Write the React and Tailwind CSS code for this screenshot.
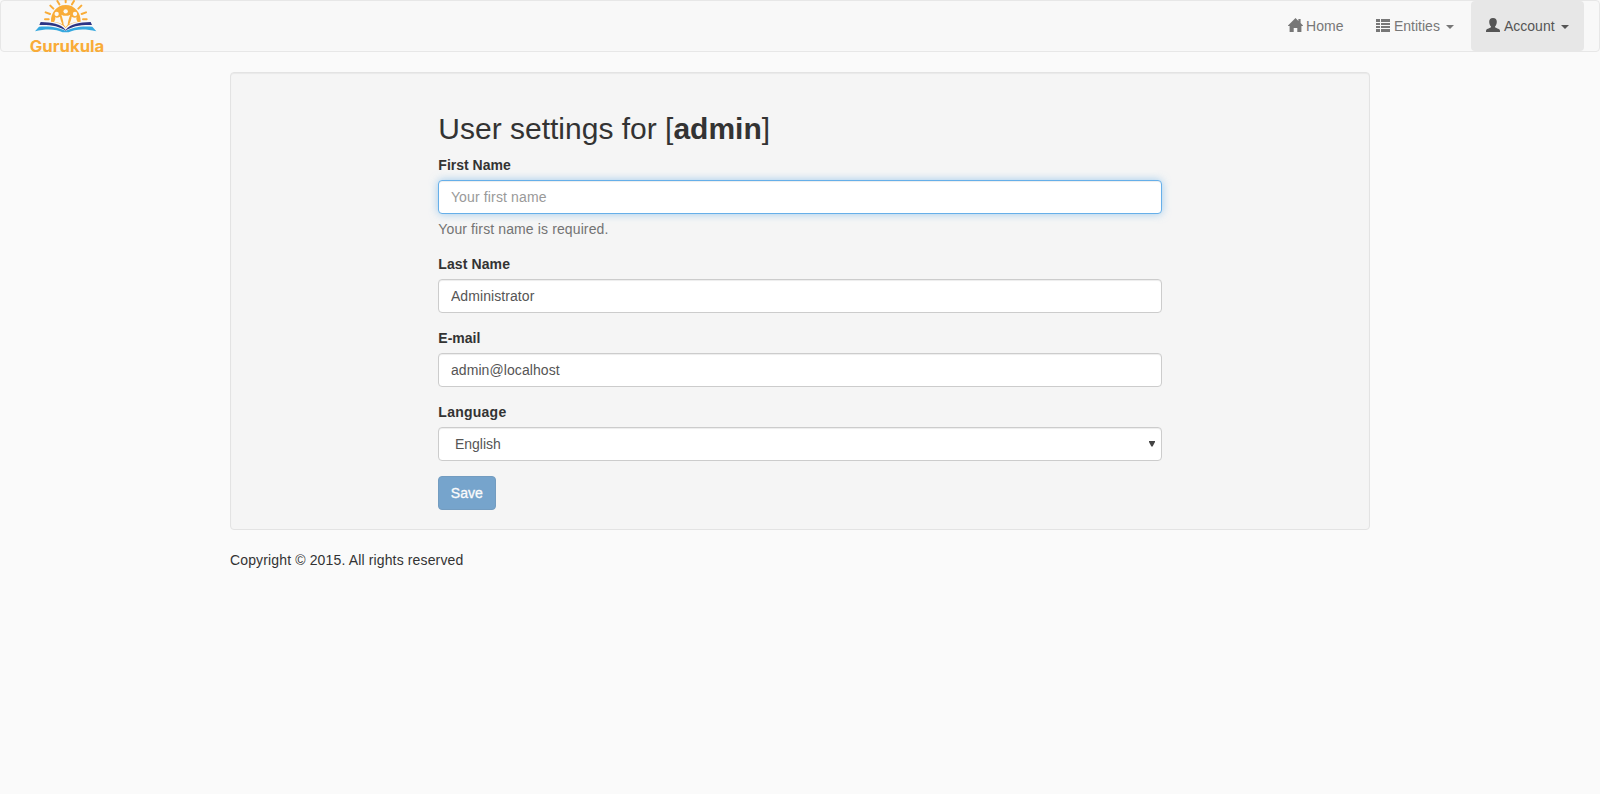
import React from "react";

function Logo() {
  return (
    <svg width="130" height="60" viewBox="0 0 390 180" className="block shrink-0" aria-label="Gurukula">
      <g stroke="#f9ac38" strokeWidth="6" strokeLinecap="round">
        <path d="M197 -2V7M172 3l6 10M222 3l-6 10M151 17l9 9M244 17l-9 9M137 37l13 5M258 37l-13 5M135 58h11M249 58h11" />
      </g>
      <path d="M153 65C152 38 170 15 197 15S243 38 242 65C222 66 206 72 197 84C188 72 172 66 153 65Z" fill="#f9ac38" />
      <g fill="#fbf9f5">
        <circle cx="170" cy="42" r="6.5" />
        <circle cx="197" cy="34" r="6.5" />
        <circle cx="225" cy="42" r="6.5" />
        <path d="M162 65C166 60 167 56 165 52Q172 55 180 50C181 58 184 66 187 73Q177 67 162 65Z" />
        <path d="M184 44Q197 51 211 44C206 55 204 64 203 74L197 82 191 74C190 64 188 55 184 44Z" />
        <path d="M233 65C229 60 228 56 230 52Q223 55 215 50C214 58 211 66 208 73Q218 67 233 65Z" />
      </g>
      <path d="M122 66C155 67 182 71 197 90C212 71 239 67 272 66L276 75C240 74 215 79 197 92C179 79 154 74 118 75Z" fill="#2c3484" />
      <path d="M117 80C152 77 180 83 197 93C214 83 242 77 277 80L289 94C254 85 222 88 206 97H188C172 88 140 85 105 94Z" fill="#35a8df" />
      <text x="89" y="157" textLength="224" lengthAdjust="spacingAndGlyphs" fontSize="47" fontWeight="700" fontFamily="Inter, sans-serif" fill="#f9ac38">
        Gurukula
      </text>
    </svg>
  );
}

function HomeIcon() {
  return (
    <svg width="15" height="14" viewBox="0 0 15 14" className="-mt-[2px] block" fill="currentColor">
      <path d="M7.5 0L10.4 2.9V1H12.6V5.1L15 7.6V8H13.4V14H9.3V10H5.7V14H1.6V8H0V7.6Z" />
    </svg>
  );
}

function ListIcon() {
  return (
    <svg width="14" height="13" viewBox="0 0 14 13" className="-mt-px block" fill="currentColor" shapeRendering="crispEdges">
      <path d="M0 0h4v3H0zM5 0h9v3H5zM0 4h4v2H0zM5 4h9v2H5zM0 7h4v2H0zM5 7h9v2H5zM0 10h4v3H0zM5 10h9v3H5z" />
    </svg>
  );
}

function UserIcon() {
  return (
    <svg width="14" height="14" viewBox="0 0 14 14" className="-mt-[2px] block" fill="currentColor">
      <path d="M7 0C9.6 0 10.8 1.4 10.8 3.7C10.8 5.8 10 7.5 9 8.4V9.3C9.8 10.2 13 10.7 13.7 11.7C14 12.2 14 13 14 14H0C0 13 0 12.2 .3 11.7C1 10.7 4.2 10.2 5 9.3V8.4C4 7.5 3.2 5.8 3.2 3.7C3.2 1.4 4.4 0 7 0Z" />
    </svg>
  );
}

function Caret() {
  return <span className="ml-[6px] mt-[1px] block border-x-4 border-t-4 border-x-transparent border-t-current" />;
}

const control =
  "block h-[34px] w-full rounded border border-[#cccccc] bg-white py-1.5 pl-[11.6px] pr-3 text-sm leading-[20px] tracking-[0.08px] text-[#555555] shadow-[inset_0_1px_1px_rgba(0,0,0,0.075)] outline-none";
const focused =
  "block h-[34px] w-full rounded border border-[#66afe9] bg-white py-1.5 pl-[11.6px] pr-3 text-sm leading-[20px] tracking-[0.14px] text-[#555555] shadow-[inset_0_1px_1px_rgba(0,0,0,0.075),0_0_8px_rgba(102,175,233,0.6)] outline-none placeholder:text-[#999999]";

function Field({ label, labelClass = "", children }) {
  return (
    <div className="mb-[15px]">
      <label className={`mb-[5px] block font-bold ${labelClass}`}>{label}</label>
      {children}
    </div>
  );
}

export default function App() {
  return (
    <div className="min-h-screen bg-[#fafafa] font-['Liberation_Sans',Arial,sans-serif] text-sm leading-[20px] text-[#333333]">
      <nav className="mb-5 flex h-[52px] justify-between rounded border border-[#e7e7e7] bg-[#f8f8f8] pr-[15px]">
        <a className="-ml-px -mt-px block h-[52px]">
          <Logo />
        </a>
        <div className="flex h-[50px] text-[#777777]">
          <a className="flex w-[87px] items-center pl-[14px]">
            <HomeIcon />
            <span className="ml-[3px] tracking-[0.1px]">Home</span>
          </a>
          <a className="flex w-[110px] items-center pl-[15px]">
            <ListIcon />
            <span className="ml-[4px]">Entities</span>
            <Caret />
          </a>
          <a className="flex w-[113px] items-center rounded bg-[#e7e7e7] pl-[15px] text-[#555555]">
            <UserIcon />
            <span className="ml-[4px]">Account</span>
            <Caret />
          </a>
        </div>
      </nav>
      <div className="mx-auto w-[1140px]">
        <main className="mb-5 h-[458px] rounded border border-[#e3e3e3] bg-[#f5f5f5] p-[19px] shadow-[inset_0_1px_1px_rgba(0,0,0,0.05)]">
          <form className="mx-auto w-[723.33px] pt-5">
            <h2 className="mb-[10px] text-[30px] font-medium leading-[33px]">
              User settings for [<b>admin</b>]
            </h2>
            <Field label="First Name">
              <input className={focused} placeholder="Your first name" />
              <p className="mt-[5px] tracking-[0.12px] text-[#737373]">Your first name is required.</p>
            </Field>
            <Field label="Last Name" labelClass="tracking-[0.1px]">
              <input className={control} defaultValue="Administrator" />
            </Field>
            <Field label="E-mail">
              <input className={control} defaultValue="admin@localhost" />
            </Field>
            <Field label="Language" labelClass="tracking-[0.25px]">
              <div className="flex h-[34px] items-center justify-between rounded border border-[#cccccc] bg-white pl-[15.6px] pr-[6px] text-[#555555] shadow-[inset_0_1px_1px_rgba(0,0,0,0.075)]">
                <span>English</span>
                <svg width="6" height="6" viewBox="0 0 6 6" fill="#444444">
                  <path d="M0 0H6V1L3.6 5.6H2.4L0 1Z" />
                </svg>
              </div>
            </Field>
            <button type="button" className="block h-[34px] w-[58px] rounded border border-[#2e6da4] bg-[#337ab7] pr-px text-center text-white opacity-65 [-webkit-text-stroke:0.3px_white]">
              Save
            </button>
          </form>
        </main>
        <footer className="tracking-[0.14px]">Copyright © 2015. All rights reserved</footer>
      </div>
    </div>
  );
}
